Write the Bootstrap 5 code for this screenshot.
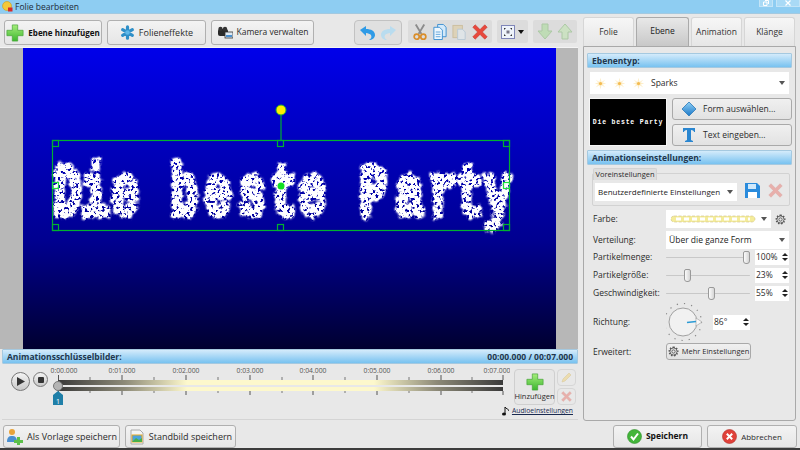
<!DOCTYPE html>
<html lang="de">
<head>
  <meta charset="UTF-8" />
  <title>Folie bearbeiten</title>
  <link href="https://cdn.jsdelivr.net/npm/bootstrap@5.3.0/dist/css/bootstrap.min.css" rel="stylesheet">
  <style>
    html, body { width: 800px; height: 450px; overflow: hidden; }
    body { background: #e8e8e8; color: #2b2b2b; font-family: "Open Sans", "Liberation Sans", sans-serif; font-size: 8px; line-height: 1.1; }
    svg { display: block; flex: none; }
    .title-bar { height: 14px; background: #8ecdf2; border-bottom: 1px solid #a3c9e0; padding-left: 2px; gap: 2px; font-size: 8.5px; color: #1d2b38; }
    .win-btn { height: 7px; background: #a9daf6; border: 1px solid #c3e4f7; border-top: 0; }
    .win-restore { width: 14px; margin-right: 3px; }
    .win-close { width: 24px; }
    .left-col { width: 581px; height: 407px; }
    .right-col { width: 219px; height: 407px; padding: 3px 4px 0 2px; }
    .tool-bar { height: 33px; padding: 6px 0 0 4px; gap: 5px; }
    .tool-btn { height: 25px; padding: 0; gap: 4px; font-size: 8.5px; color: #2b2b2b; background: linear-gradient(#f3f3f3, #e6e6e6); border: 1px solid #b0b0b0; border-radius: 3px; white-space: nowrap; }
    .tool-btn b { font-weight: 700; color: #111; }
    .w-add { width: 98px; } .w-add b { font-size: 8px; }
    .w-fx { width: 99px; font-size: 9px; } .w-cam { width: 103px; margin-right: 35px; }
    .tool-group { height: 23px; background: #dcdcdc; border-radius: 2px; gap: 4px; padding: 0 4px; }
    .group-undo { height: 25px; width: 48px; border: 1px solid #c2c2c2; border-radius: 4px; background: #e0e0e0; justify-content: center; margin-right: 1px; }
    .group-fit { gap: 3px; }
    .canvas-wrap { height: 302px; background: #b7b7b7; margin-right: 3px; padding: 0 22px 0 23px; border-top: 1px solid #f4f4f4; }
    .stage { width: 533px; height: 301px; background: linear-gradient(#0000ea, #000090 64%, #000030); }
    .sect-head { height: 15px; padding: 0 4px; background: linear-gradient(#d4ebfb, #78c2f0); border: 1px solid #a5c9e0; border-radius: 1px; font-weight: 700; font-size: 8.5px; color: #22364c; }
    .key-panel { margin: 0 3px 0 2px; height: 71px; }
    .key-body { height: 56px; border-bottom: 1px solid #d4d4d4; }
    .play-box { width: 48px; padding: 4px 0 0 9px; gap: 3px; }
    .round-play { width: 19px; height: 19px; border: 1px solid #777; border-radius: 50%; background: linear-gradient(#f4f4f4, #c8c8c8); }
    .round-stop { width: 15px; height: 15px; border: 1px solid #777; border-radius: 50%; background: linear-gradient(#f4f4f4, #c8c8c8); }
    .add-key { width: 41px; height: 36px; margin: 5px 0 0 4px; border: 1px solid #cfcfcf; border-radius: 4px; background: #e6e6e6; padding: 3px 0 0; font-size: 7.5px; gap: 1px; }
    .mini-key { width: 19px; height: 17px; margin: 5px 0 0 2px; border: 1px solid #d6d6d6; border-radius: 4px; background: #e8e8e8; }
    .mini-key + .mini-key { margin-top: 2px; }
    .audio-link { position: absolute; right: 5px; bottom: 3px; gap: 3px; font-size: 6.8px; color: #1a2a50; text-decoration: underline; }
    .side-tabs { height: 29px; border: 0; gap: 2px; }
    .side-tabs .nav-link { width: 51px; height: 29px; padding: 0; display: flex; align-items: center; justify-content: center; color: #333; font-size: 8.5px; background: linear-gradient(#f6f6f6, #e6e6e6); border: 1px solid #d6d6d6; border-bottom: 0; border-radius: 3px 3px 0 0; margin: 0; }
    .side-tabs .nav-link.active { background: linear-gradient(#e8e8e8, #c8c8c8); border-color: #aaa; color: #222; width: 53px; padding-bottom: 3px; }
    .side-body { height: 375px; border: 1px solid #a9a9a9; border-radius: 0 0 3px 3px; padding: 6px 3px 0 3px; background: #e8e8e8; }
    .type-select, .flat-select { border: 0; border-radius: 0; background-color: #fff; padding: 0 14px 0 3px; color: #222; box-shadow: none; background-position: right 4px center; background-size: 6px 4px; background-image: url("data:image/svg+xml,%3csvg xmlns='http://www.w3.org/2000/svg' viewBox='0 0 6 4'%3e%3cpath fill='%23555' d='M0 0h6L3 4z'/%3e%3c/svg%3e"); }
    .type-select { width: 142px; height: 18px; font-size: 8px; flex: none; }
    .flat-select { font-size: 8.5px; }
    .type-row { height: 22px; margin: 4px 3px 0; background: #fff; padding-left: 4px; gap: 6px; font-size: 8.5px; }
    .type-arrow { margin-left: auto; margin-right: 4px; }
    .shape-row { margin: 4px 0 0 2px; gap: 5px; height: 48px; }
    .thumb-box { width: 78px; height: 48px; background: #000; color: #fff; font: 700 6.5px "Liberation Mono", monospace; letter-spacing: .8px; border: 1px solid #f5f5f5; white-space: nowrap; }
    .shape-btn { width: 120px; height: 22px; gap: 6px; padding: 0 0 0 8px; font-size: 8.5px; background: linear-gradient(#f0f0f0, #e2e2e2); border: 1px solid #a9a9a9; border-radius: 3px; color: #2b2b2b; justify-content: flex-start; }
    .sect-gap { margin-top: 4px; }
    .preset-box { position: relative; height: 33px; margin: 8px 2px 0 5px; border: 1px solid #d2d2d2; border-radius: 2px; padding: 9px 0 0 2px; gap: 8px; }
    .preset-tab { position: absolute; left: 0; top: -6px; width: 64px; height: 12px; background: #dedede; border: 1px solid #d2d2d2; border-bottom: 0; border-radius: 2px 2px 0 0; font-size: 7.5px; text-align: center; line-height: 11px; }
    .set-row { height: 18px; margin-left: 6px; }
    .mt-farbe { margin-top: 4px; } .mt-vert { margin-top: 3px; } .mt-menge { margin-top: -1px; }
    .set-label { width: 73px; font-size: 8.5px; color: #2b2b2b; }
    .color-strip { width: 105px; height: 18px; background: #fff; padding-left: 4px; }
    .sel-wide { width: 123px; height: 18px; }
    .slide { width: 84px; height: 18px; margin-right: 5px; }
    .slide::-webkit-slider-runnable-track { height: 1px; background: #c8c8c8; }
    .slide::-webkit-slider-thumb { width: 7px; height: 13px; margin-top: -6px; background: linear-gradient(90deg, #fbfbfb, #d5d5d5); border: 1px solid #999; border-radius: 2px 2px 3px 3px; }
    .spin-box { width: 34px; height: 15px; background: #fff; padding-left: 1px; font-size: 8.5px; justify-content: space-between; }
    .spin-dir { width: 37px; margin-left: 7px; }
    .spin-arrows { width: 9px; gap: 2px; }
    .spin-up { width: 0; height: 0; border: 3px solid transparent; border-top: 0; border-bottom: 3px solid #222; }
    .spin-down { width: 0; height: 0; border: 3px solid transparent; border-bottom: 0; border-top: 3px solid #222; }
    .dial-row { height: 40px; }
    .more-row { height: 17px; margin-top: 1px; }
    .more-btn { width: 85px; height: 17px; gap: 3px; padding: 0; font-size: 7.5px; background: linear-gradient(#f0f0f0, #e2e2e2); border: 1px solid #a9a9a9; border-radius: 3px; color: #2b2b2b; }
    .foot-bar { height: 27px; padding: 4px 3px 0; gap: 5px; }
    .foot-bar .tool-btn { height: 23px; }
    .w-tpl { width: 117px; font-size: 9px; } .w-still { width: 111px; font-size: 9px; }
    .w-save { width: 89px; margin-left: auto; } .w-cancel { width: 90px; font-size: 8px; }
    .end-line { height: 2px; background: #3c3c3c; }
  </style>
</head>
<body>

  <svg width="0" height="0" class="position-absolute">
    <defs>
      <linearGradient id="gPlus" x1="0" y1="0" x2="0" y2="1"><stop offset="0" stop-color="#a6ee7c"/><stop offset="1" stop-color="#3cb62e"/></linearGradient>
      <linearGradient id="gBlue" x1="0" y1="0" x2="0" y2="1"><stop offset="0" stop-color="#8fd0f5"/><stop offset="1" stop-color="#1c78c8"/></linearGradient>
      <symbol id="icPlus" viewBox="0 0 20 20"><path d="M7 1h6v6h6v6h-6v6H7v-6H1V7h6z" fill="url(#gPlus)" stroke="#4aa63c" stroke-width=".8"/></symbol>
      <symbol id="icCross" viewBox="0 0 20 20"><path d="M4 1l6 6 6-6 3 3-6 6 6 6-3 3-6-6-6 6-3-3 6-6-6-6z" fill="#e8483c" stroke="#c23a30" stroke-width=".7"/></symbol>
      <symbol id="icGear" viewBox="0 0 20 20"><g fill="none" stroke="#555" stroke-width="1.600"><circle cx="10" cy="10" r="3"/><circle cx="10" cy="10" r="6.500"/><path stroke-width="2.600" stroke-dasharray="2.600 2.500" d="M10 2.200a7.800 7.800 0 1 1-.01 0"/></g></symbol>
      <symbol id="icSpark" viewBox="0 0 16 16"><path d="M8 1l1.300 5L14 3l-3.200 3.800L15 8l-4.200 1.200L14 13l-4.700-3L8 15l-1.300-5L2 13l3.200-3.800L1 8l4.200-1.200L2 3l4.700 3z" fill="#fdeec8"/><circle cx="8" cy="8" r="2" fill="#f4bb52"/></symbol>
      <filter id="sparkFx" filterUnits="userSpaceOnUse" x="0" y="80" width="533" height="130">
        <feTurbulence type="fractalNoise" baseFrequency=".2" numOctaves="2" seed="4" result="warp"/>
        <feDisplacementMap in="SourceGraphic" in2="warp" scale="8" xChannelSelector="R" yChannelSelector="G" result="moved"/>
        <feGaussianBlur in="moved" stdDeviation="1.100" result="soft"/>
        <feTurbulence type="fractalNoise" baseFrequency=".34" numOctaves="2" seed="9" result="dots"/>
        <feColorMatrix in="dots" type="matrix" values="0 0 0 0 1  0 0 0 0 1  0 0 0 0 1  6 0 0 0 -2" result="mask"/>
        <feComposite in="soft" in2="mask" operator="in" result="holes"/>
        <feGaussianBlur in="holes" stdDeviation=".45" result="fluffy"/>
        <feComponentTransfer in="fluffy"><feFuncA type="linear" slope="1.700"/></feComponentTransfer>
      </filter>
    </defs>
  </svg>

  <div class="title-bar d-flex align-items-center">
    <svg width="11" height="11" viewBox="0 0 11 11"><circle cx="5" cy="5" r="4.500" fill="#f4c83a" stroke="#c99a20" stroke-width=".6"/><rect x="6" y="6.500" width="4.500" height="4" fill="#d42b2b"/></svg>
    <span>Folie bearbeiten</span>
    <div class="ms-auto align-self-start d-flex">
      <div class="win-btn win-restore d-flex justify-content-center"><svg width="6" height="6" viewBox="0 0 6 6"><path d="M2 .5h3.500V4M.5 2h3.500v3.500H.5z" fill="none" stroke="#fff"/></svg></div>
      <div class="win-btn win-close d-flex justify-content-center"><svg width="6" height="6" viewBox="0 0 6 6"><path d="M.5.5l5 5M5.500.5l-5 5" stroke="#fff" stroke-width="1.200"/></svg></div>
    </div>
  </div>

  <div class="d-flex">
    <!-- linke Seite -->
    <div class="left-col d-flex flex-column">
      <div class="tool-bar d-flex align-items-start">
        <button class="btn tool-btn w-add d-flex align-items-center justify-content-center"><svg width="18" height="18"><use href="#icPlus"/></svg><b>Ebene hinzufügen</b></button>
        <button class="btn tool-btn w-fx d-flex align-items-center justify-content-center">
          <svg width="15" height="15" viewBox="0 0 16 16"><g stroke="#2e8fc8" stroke-width="3.400" stroke-linecap="round"><path d="M8 2v12M2.800 5l10.400 6M2.800 11l10.400-6"/></g><circle cx="8" cy="8" r="2.500" fill="#60b8e8"/></svg>
          <span>Folieneffekte</span>
        </button>
        <button class="btn tool-btn w-cam d-flex align-items-center justify-content-center">
          <svg width="16" height="13" viewBox="0 0 16 13"><rect x="1" y="3" width="10" height="7" rx="2" fill="#2a2a2a"/><circle cx="3.500" cy="3" r="2.200" fill="#333"/><circle cx="8" cy="3" r="2.200" fill="#333"/><rect x="8" y="6" width="8" height="6" fill="#dfe9f2" stroke="#333" stroke-width=".8"/><rect x="9" y="9" width="6" height="2" fill="#4a90d0"/></svg>
          <span>Kamera verwalten</span>
        </button>
        <div class="tool-group group-undo d-flex align-items-center">
          <svg width="17" height="16" viewBox="0 0 17 16"><path d="M1 5l6-4v3c5 0 9 2 9 6 0 3-3 5-6 5 2-1 3-3 2-5-1-1-3-2-5-2v3z" fill="#2f9be6"/></svg>
          <svg width="17" height="16" viewBox="0 0 17 16"><path d="M16 5l-6-4v3C5 4 1 6 1 10c0 3 3 5 6 5-2-1-3-3-2-5 1-1 3-2 5-2v3z" fill="#b9dcef"/></svg>
        </div>
        <div class="tool-group d-flex align-items-center">
          <svg width="16" height="18" viewBox="0 0 17 18"><path d="M4 1l6 10M13 1L7 11" stroke="#8b8b8b" stroke-width="2"/><circle cx="5" cy="14" r="2.700" fill="none" stroke="#d98d2a" stroke-width="1.800"/><circle cx="12" cy="14" r="2.700" fill="none" stroke="#d98d2a" stroke-width="1.800"/></svg>
          <svg width="16" height="18" viewBox="0 0 17 18"><path d="M6 1h6l3 3v10H6z" fill="#d4e9f9" stroke="#3d8fd0"/><path d="M2 4h6l3 3v10H2z" fill="#eef7fe" stroke="#3d8fd0"/><path d="M4 9h5M4 11.500h5M4 14h5" stroke="#3d8fd0" stroke-width=".8"/></svg>
          <svg width="16" height="18" viewBox="0 0 17 18" opacity=".45"><rect x="1" y="2" width="10" height="13" fill="#e0c88e" stroke="#b79a55"/><path d="M6 6h5l3 3v8H6z" fill="#e4eef6" stroke="#8fb2cc"/></svg>
          <svg width="16" height="16"><use href="#icCross"/></svg>
        </div>
        <div class="tool-group group-fit d-flex align-items-center">
          <svg width="14" height="14" viewBox="0 0 14 14"><rect x=".5" y=".5" width="13" height="13" fill="#eef3fa" stroke="#7f86b8"/><path d="M3 3h2L3 5zM11 3H9l2 2zM3 11h2l-2-2zM11 11H9l2-2z" fill="#333"/><rect x="5.500" y="5.500" width="3" height="3" fill="#778"/></svg>
          <svg width="6" height="4" viewBox="0 0 6 4"><path d="M0 0h6L3 4z" fill="#111"/></svg>
        </div>
        <div class="tool-group d-flex align-items-center">
          <svg width="16" height="17" viewBox="0 0 16 17" opacity=".55"><path d="M5 1h6v7h4l-7 8-7-8h4z" fill="#a8dc98" stroke="#84b878"/></svg>
          <svg width="16" height="17" viewBox="0 0 16 17" opacity=".55"><path d="M5 16h6V9h4L8 1 1 9h4z" fill="#bfe6b0" stroke="#84b878"/></svg>
        </div>
      </div>

      <div class="canvas-wrap">
        <div class="stage">
          <svg width="533" height="301" viewBox="0 0 533 301">
            <g filter="url(#sparkFx)">
              <text transform="scale(.62 1)" y="167" x="71 116 165 213 260 315 369 421 466 516 565 623 677 721 766" text-anchor="middle" fill="#fff" stroke="#fff" stroke-width="5" font-family="Liberation Mono" font-weight="700" font-size="74">Die beste Party</text>
            </g>
            <g fill="none" stroke="#00b030" stroke-width="1.200">
              <rect x="29.500" y="92.500" width="457" height="90"/>
              <rect x="29.500" y="92.500" width="6" height="6"/><rect x="254.500" y="92.500" width="6" height="6"/><rect x="480.500" y="92.500" width="6" height="6"/>
              <rect x="29.500" y="176.500" width="6" height="6"/><rect x="254.500" y="176.500" width="6" height="6"/><rect x="480.500" y="176.500" width="6" height="6"/>
              <rect x="29.500" y="134.500" width="6" height="6" stroke="#20e040"/><rect x="480.500" y="134.500" width="6" height="6" stroke="#20e040"/>
              <path d="M258 62v30"/>
            </g>
            <circle cx="258" cy="62" r="5" fill="#ffee00" stroke="#1ea838"/>
            <circle cx="258" cy="138" r="3.500" fill="#10e020"/>
          </svg>
        </div>
      </div>

      <div class="key-panel">
        <div class="sect-head d-flex align-items-center justify-content-between">
          <span>Animationsschlüsselbilder:</span><span>00:00.000 / 00:07.000</span>
        </div>
        <div class="key-body d-flex position-relative">
          <div class="play-box d-flex align-items-start">
            <div class="round-play d-flex align-items-center justify-content-center mt-1"><svg width="8" height="9" viewBox="0 0 8 9"><path d="M0 0l8 4.500L0 9z" fill="#333"/></svg></div>
            <div class="round-stop d-flex align-items-center justify-content-center mt-1"><svg width="6" height="6"><rect width="6" height="6" rx="1" fill="#333"/></svg></div>
          </div>
          <svg width="460" height="56" viewBox="0 0 460 56">
            <defs><linearGradient id="gTrack"><stop offset="0" stop-color="#3a3a3a"/><stop offset=".15" stop-color="#8d8a78"/><stop offset=".29" stop-color="#fdf8cc"/><stop offset=".71" stop-color="#fdf8cc"/><stop offset=".85" stop-color="#8d8a78"/><stop offset="1" stop-color="#3a3a3a"/></linearGradient></defs>
            <g font-family="Open Sans, Liberation Sans, sans-serif" font-size="6.800" fill="#555" text-anchor="middle">
              <text x="14" y="9">0:00.000</text><text x="72" y="9">0:01.000</text><text x="136" y="9">0:02.000</text><text x="200" y="9">0:03.000</text><text x="263" y="9">0:04.000</text><text x="327" y="9">0:05.000</text><text x="391" y="9">0:06.000</text><text x="447" y="9">0:07.000</text>
            </g>
            <rect x="8" y="16" width="445" height="5" fill="url(#gTrack)"/>
            <rect x="8" y="23" width="445" height="4" fill="url(#gTrack)"/>
            <g stroke="#555" stroke-width="1">
              <path d="M8.500 11v5M72 11v5M136 11v5M200 11v5M263 11v5M327 11v5M391 11v5M453 11v5M8.500 27v4M72 27v4M136 27v4M200 27v4M263 27v4M327 27v4M391 27v4M453 27v4"/>
              <path d="M40 13v3M104 13v3M168 13v3M232 13v3M295 13v3M359 13v3M422 13v3M40 27v2M104 27v2M168 27v2M232 27v2M295 27v2M359 27v2M422 27v2" stroke="#777"/>
            </g>
            <circle cx="8" cy="22" r="4.500" fill="#b4b4b4" stroke="#777"/>
            <path d="M8 27l5 4v10H3V31z" fill="#1f7fa8"/>
            <text x="8" y="40" font-size="7" fill="#fff" text-anchor="middle" font-family="Open Sans, sans-serif">1</text>
          </svg>
          <div class="add-key d-flex flex-column align-items-center">
            <svg width="18" height="18"><use href="#icPlus"/></svg>
            <span>Hinzufügen</span>
          </div>
          <div class="d-flex flex-column">
            <div class="mini-key d-flex align-items-center justify-content-center"><svg width="11" height="11" viewBox="0 0 11 11"><path d="M1 10l1-3 6-6 2 2-6 6z" fill="#ecdcae" stroke="#d8cba0" stroke-width=".6"/></svg></div>
            <div class="mini-key d-flex align-items-center justify-content-center"><svg width="11" height="11" opacity=".35"><use href="#icCross"/></svg></div>
          </div>
          <div class="audio-link d-flex align-items-center">
            <svg width="7" height="10" viewBox="0 0 7 10"><path d="M3 1v7" stroke="#111" stroke-width="1"/><path d="M3 1c1 2 4 2 4 4" stroke="#111" fill="none"/><ellipse cx="2" cy="8" rx="2" ry="1.600" fill="#111"/></svg>
            <span>Audioeinstellungen</span>
          </div>
        </div>
      </div>
    </div>

    <!-- rechte Seite -->
    <div class="right-col">
      <ul class="nav nav-tabs side-tabs">
        <li class="nav-item"><a class="nav-link" href="#">Folie</a></li>
        <li class="nav-item"><a class="nav-link active" href="#">Ebene</a></li>
        <li class="nav-item"><a class="nav-link" href="#">Animation</a></li>
        <li class="nav-item"><a class="nav-link" href="#">Klänge</a></li>
      </ul>
      <div class="side-body">
        <div class="sect-head d-flex align-items-center">Ebenentyp:</div>
        <div class="type-row d-flex align-items-center">
          <svg width="13" height="13"><use href="#icSpark"/></svg>
          <svg width="13" height="13"><use href="#icSpark"/></svg>
          <svg width="13" height="13"><use href="#icSpark"/></svg>
          <span>Sparks</span>
          <svg class="type-arrow" width="6" height="4" viewBox="0 0 6 4"><path d="M0 0h6L3 4z" fill="#555"/></svg>
        </div>
        <div class="shape-row d-flex">
          <div class="thumb-box d-flex align-items-center justify-content-center">Die beste Party</div>
          <div class="d-flex flex-column justify-content-between">
            <button class="btn shape-btn d-flex align-items-center">
              <svg width="16" height="16" viewBox="0 0 16 16"><path d="M8 1l7 7-7 7-7-7z" fill="url(#gBlue)" stroke="#2b78b8" stroke-width=".8"/></svg>
              <span>Form auswählen...</span>
            </button>
            <button class="btn shape-btn d-flex align-items-center">
              <svg width="16" height="16" viewBox="0 0 16 16"><path d="M2 1h12v4h-1c0-1-1-2-3-2v10l2 1v1H4v-1l2-1V3C4 3 3 4 3 5H2z" fill="#2a86d0"/></svg>
              <span>Text eingeben...</span>
            </button>
          </div>
        </div>
        <div class="sect-head sect-gap d-flex align-items-center">Animationseinstellungen:</div>
        <div class="preset-box d-flex align-items-start">
          <div class="preset-tab">Voreinstellungen</div>
          <select class="form-select type-select"><option>Benutzerdefinierte Einstellungen</option></select>
          <svg width="15" height="15" viewBox="0 0 15 15"><path d="M0 0h12l3 3v12H0z" fill="#2a8bdc"/><rect x="3" y="1" width="8" height="5" fill="#cfe8fb"/><rect x="3" y="9" width="9" height="6" fill="#fff"/></svg>
          <svg width="15" height="15" opacity=".35"><use href="#icCross"/></svg>
        </div>
        <div class="set-row mt-farbe d-flex align-items-center">
          <span class="set-label">Farbe:</span>
          <div class="color-strip d-flex align-items-center">
            <svg width="86" height="10" viewBox="0 0 86 10"><rect x="1" y="2" width="84" height="6" rx="3" fill="#f4ec9a" stroke="#cfc08a" stroke-width=".6" stroke-dasharray="3 1.500"/><path d="M6 5h74" stroke="#fff" stroke-width="3" stroke-dasharray="5 3"/></svg>
            <svg class="ms-auto me-1" width="6" height="4" viewBox="0 0 6 4"><path d="M0 0h6L3 4z" fill="#555"/></svg>
          </div>
          <svg class="ms-1" width="11" height="11"><use href="#icGear"/></svg>
        </div>
        <div class="set-row mt-vert d-flex align-items-center">
          <span class="set-label">Verteilung:</span>
          <select class="form-select flat-select sel-wide"><option>Über die ganze Form</option></select>
        </div>
        <div class="set-row mt-menge d-flex align-items-center">
          <span class="set-label">Partikelmenge:</span>
          <input type="range" class="form-range slide" value="100">
          <div class="spin-box d-flex align-items-center"><span>100%</span><div class="spin-arrows d-flex flex-column align-items-center"><div class="spin-up"></div><div class="spin-down"></div></div></div>
        </div>
        <div class="set-row d-flex align-items-center">
          <span class="set-label">Partikelgröße:</span>
          <input type="range" class="form-range slide" value="23">
          <div class="spin-box d-flex align-items-center"><span>23%</span><div class="spin-arrows d-flex flex-column align-items-center"><div class="spin-up"></div><div class="spin-down"></div></div></div>
        </div>
        <div class="set-row d-flex align-items-center">
          <span class="set-label">Geschwindigkeit:</span>
          <input type="range" class="form-range slide" value="55">
          <div class="spin-box d-flex align-items-center"><span>55%</span><div class="spin-arrows d-flex flex-column align-items-center"><div class="spin-up"></div><div class="spin-down"></div></div></div>
        </div>
        <div class="set-row dial-row d-flex align-items-center">
          <span class="set-label">Richtung:</span>
          <svg width="40" height="40" viewBox="2 0 40 40">
            <circle cx="19" cy="20" r="18.500" fill="none" stroke="#888" stroke-width="1.200" stroke-dasharray="1.200 6.100"/>
            <circle cx="19" cy="20" r="14" fill="#f1f1f1" stroke="#a0a0a0"/>
            <path d="M32 16l6 4-6 4z" fill="#f8f8f8" stroke="#9a9a9a" stroke-width=".6"/>
            <path d="M23 20.500l9-1" stroke="#2b9ad4" stroke-width="1.500"/>
          </svg>
          <div class="spin-box spin-dir d-flex align-items-center"><span>86°</span><div class="spin-arrows d-flex flex-column align-items-center"><div class="spin-up"></div><div class="spin-down"></div></div></div>
        </div>
        <div class="set-row more-row d-flex align-items-center">
          <span class="set-label">Erweitert:</span>
          <button class="btn more-btn d-flex align-items-center justify-content-center">
            <svg width="11" height="11"><use href="#icGear"/></svg><span>Mehr Einstellungen</span>
          </button>
        </div>
      </div>
    </div>
  </div>

  <div class="foot-bar d-flex align-items-start">
    <button class="btn tool-btn w-tpl d-flex align-items-center justify-content-center">
      <svg width="17" height="17" viewBox="0 0 17 17"><circle cx="6" cy="4" r="3" fill="#e8a33a"/><path d="M1 14c0-5 2-6 5-6s5 1 5 6z" fill="#4a8fd0"/><path d="M11 9h3v3h3v3h-3v2h-3v-2H8v-3h3z" fill="#5cc04a"/></svg>
      <span>Als Vorlage speichern</span>
    </button>
    <button class="btn tool-btn w-still d-flex align-items-center justify-content-center">
      <svg width="16" height="16" viewBox="0 0 16 16"><path d="M2 1h9l3 3v11H2z" fill="#f4f4f4" stroke="#aaa"/><rect x="3" y="6" width="10" height="7" fill="#4aa3de" stroke="#e8a822"/><path d="M3 13l4-4 3 2 3-2v4z" fill="#48b04a"/></svg>
      <span>Standbild speichern</span>
    </button>
    <button class="btn tool-btn w-save d-flex align-items-center justify-content-center">
      <svg width="15" height="15" viewBox="0 0 15 15"><circle cx="7.500" cy="7.500" r="7" fill="#43b53a" stroke="#2f8f2a" stroke-width=".6"/><path d="M4 7.500l2.500 3L11 4.500" fill="none" stroke="#fff" stroke-width="2"/></svg>
      <b>Speichern</b>
    </button>
    <button class="btn tool-btn w-cancel d-flex align-items-center justify-content-center">
      <svg width="15" height="15" viewBox="0 0 15 15"><circle cx="7.500" cy="7.500" r="7" fill="#e0413a" stroke="#b02f2a" stroke-width=".6"/><path d="M4.800 4.800l5.400 5.400M10.200 4.800l-5.400 5.400" stroke="#fff" stroke-width="2"/></svg>
      <span>Abbrechen</span>
    </button>
  </div>
  <div class="end-line"></div>

  <script src="https://cdn.jsdelivr.net/npm/bootstrap@5.3.0/dist/js/bootstrap.bundle.min.js"></script>
</body>
</html>
